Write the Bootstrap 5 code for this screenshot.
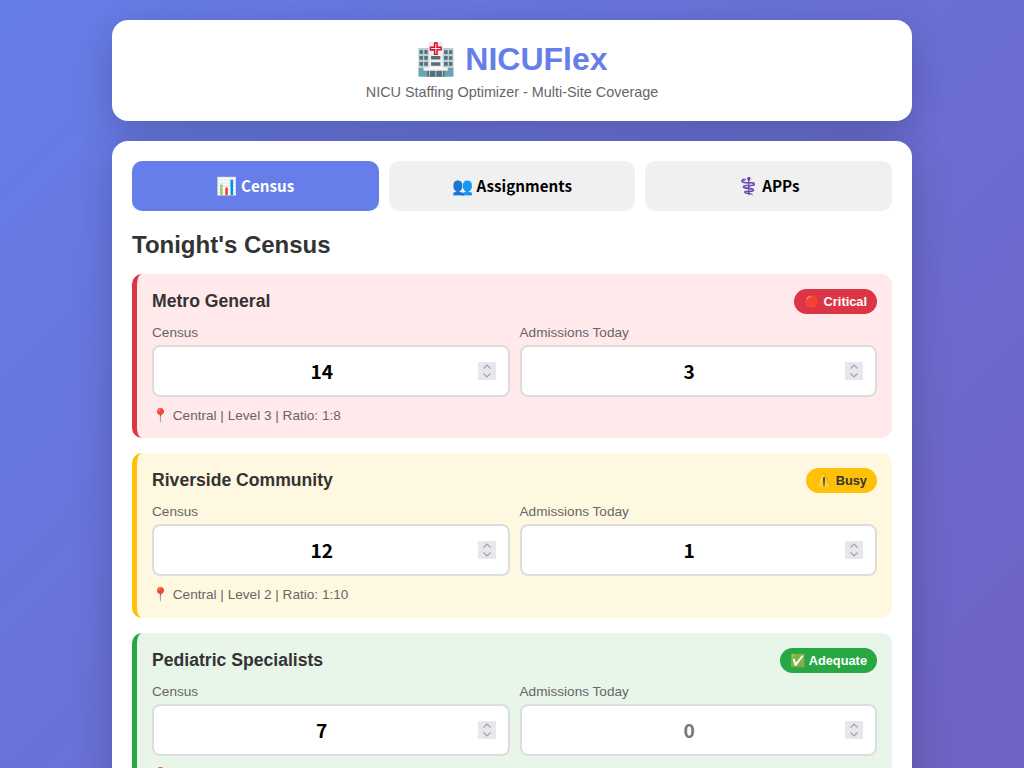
<!DOCTYPE html>
<html lang="en">
<head>
    <meta charset="UTF-8">
    <meta name="viewport" content="width=device-width, initial-scale=1.0">
    <title>NICUFlex</title>
    <link rel="stylesheet" href="https://cdn.jsdelivr.net/npm/bootstrap@5.3.0/dist/css/bootstrap.min.css">
    <style>
        body {
            font-family: "Liberation Sans", Arial, sans-serif;
            background: linear-gradient(135deg, #667eea 0%, #764ba2 100%);
            background-size: 100% 2230px;
            min-height: 100vh;
            padding: 20px;
            color: #333;
        }
        .app-wrap { max-width: 800px; margin: 0 auto; }
        .app-header {
            background: #fff;
            border-radius: 16px;
            padding: 20px;
            margin-bottom: 20px;
            box-shadow: 0 10px 40px rgba(0, 0, 0, 0.2);
        }
        .app-title { font-size: 32px; font-weight: 700; color: #667eea; margin: 0 0 5px; line-height: 38px; }
        .app-sub { font-size: 14.4px; color: #666; margin: 0; line-height: 18px; }
        .app-main { background: #fff; border-radius: 16px; padding: 20px; box-shadow: 0 10px 40px rgba(0, 0, 0, 0.2); }
        .tabs-row { gap: 10px; }
        .tab-btn {
            flex: 1 1 0;
            height: 50px;
            padding: 0 0 2px;
            border: 0;
            border-radius: 10px;
            background: #f0f0f0;
            color: #000;
            font-family: "Noto Sans CJK SC", sans-serif;
            font-size: 15.2px;
            font-weight: 600;
        }
        .tab-btn.is-active { background: #667eea; color: #fff; }
        .tab-ico { font-size: 17px; }
        .section-title { font-size: 24px; font-weight: 700; color: #333; margin: 20px 0 15px; line-height: 28px; }
        .site-box { border-left: 5px solid; border-radius: 10px; padding: 15px; margin-bottom: 15px; }
        .site-critical { background: #ffe9eb; border-color: #dc3545; }
        .site-busy { background: #fff8e1; border-color: #ffc107; }
        .site-ok { background: #e8f5e9; border-color: #28a745; }
        .site-top { margin-bottom: 11px; }
        .site-name { font-size: 17.6px; font-weight: 700; margin: 0; color: #333; line-height: 21px; }
        .status-pill { font-size: 12.8px; font-weight: 700; padding: 5px 10px; border-radius: 20px; line-height: 15px; }
        .pill-critical { background: #dc3545; color: #fff; }
        .pill-busy { background: #ffc107; color: #333; }
        .pill-ok { background: #28a745; color: #fff; }
        .fields-row { gap: 10px; }
        .field-label { display: block; font-size: 13.6px; color: #666; margin-bottom: 4px; line-height: 16px; }
        .num-input {
            height: 52px;
            border: 2px solid #ddd;
            border-radius: 8px;
            padding: 12px;
            text-align: center;
            font-family: "Noto Sans CJK SC", sans-serif;
            font-size: 19.2px;
            font-weight: 600;
            color: #000;
        }
        /* spinner drawn as the small grey box with chevrons */
        .num-input::-webkit-inner-spin-button {
            -webkit-appearance: none;
            appearance: none;
            opacity: 1;
            width: 18px;
            height: 18px;
            margin-top: 5px;
            background: url("data:image/svg+xml,%3Csvg xmlns='http://www.w3.org/2000/svg' width='18' height='18'%3E%3Crect width='18' height='18' fill='%23e7e7ed'/%3E%3Cpath d='M5.5 6.5 9 3 12.5 6.5M5.5 11.5 9 15 12.5 11.5' fill='none' stroke='%23a2a2ae' stroke-width='1.2'/%3E%3C/svg%3E") no-repeat center;
        }
        .num-zero { color: #777; }
        .site-meta { font-size: 13.6px; color: #666; margin-top: 11px; line-height: 15.45px; }
    </style>
</head>
<body>
    <div class="app-wrap">
        <div class="app-header text-center">
            <h1 class="app-title">🏥 NICUFlex</h1>
            <p class="app-sub">NICU Staffing Optimizer - Multi-Site Coverage</p>
        </div>

        <div class="app-main">
            <div class="d-flex tabs-row">
                <button class="tab-btn is-active" type="button"><span class="tab-ico">📊</span> Census</button>
                <button class="tab-btn" type="button"><span class="tab-ico">👥</span> Assignments</button>
                <button class="tab-btn" type="button"><span class="tab-ico">⚕️</span> APPs</button>
            </div>

            <h2 class="section-title">Tonight's Census</h2>

            <div class="site-box site-critical">
                <div class="d-flex justify-content-between align-items-center site-top">
                    <h3 class="site-name">Metro General</h3>
                    <span class="status-pill pill-critical">🔴 Critical</span>
                </div>
                <div class="d-flex fields-row">
                    <div class="flex-fill w-50">
                        <label class="field-label">Census</label>
                        <input class="form-control num-input" type="number" value="14">
                    </div>
                    <div class="flex-fill w-50">
                        <label class="field-label">Admissions Today</label>
                        <input class="form-control num-input" type="number" value="3">
                    </div>
                </div>
                <div class="site-meta">📍 Central | Level 3 | Ratio: 1:8</div>
            </div>

            <div class="site-box site-busy">
                <div class="d-flex justify-content-between align-items-center site-top">
                    <h3 class="site-name">Riverside Community</h3>
                    <span class="status-pill pill-busy">⚠️ Busy</span>
                </div>
                <div class="d-flex fields-row">
                    <div class="flex-fill w-50">
                        <label class="field-label">Census</label>
                        <input class="form-control num-input" type="number" value="12">
                    </div>
                    <div class="flex-fill w-50">
                        <label class="field-label">Admissions Today</label>
                        <input class="form-control num-input" type="number" value="1">
                    </div>
                </div>
                <div class="site-meta">📍 Central | Level 2 | Ratio: 1:10</div>
            </div>

            <div class="site-box site-ok">
                <div class="d-flex justify-content-between align-items-center site-top">
                    <h3 class="site-name">Pediatric Specialists</h3>
                    <span class="status-pill pill-ok">✅ Adequate</span>
                </div>
                <div class="d-flex fields-row">
                    <div class="flex-fill w-50">
                        <label class="field-label">Census</label>
                        <input class="form-control num-input" type="number" value="7">
                    </div>
                    <div class="flex-fill w-50">
                        <label class="field-label">Admissions Today</label>
                        <input class="form-control num-input num-zero" type="number" value="0">
                    </div>
                </div>
                <div class="site-meta">📍 Central | Level 2 | Ratio: 1:8</div>
            </div>
        </div>
    </div>
    <script src="https://cdn.jsdelivr.net/npm/bootstrap@5.3.0/dist/js/bootstrap.bundle.min.js"></script>
</body>
</html>
